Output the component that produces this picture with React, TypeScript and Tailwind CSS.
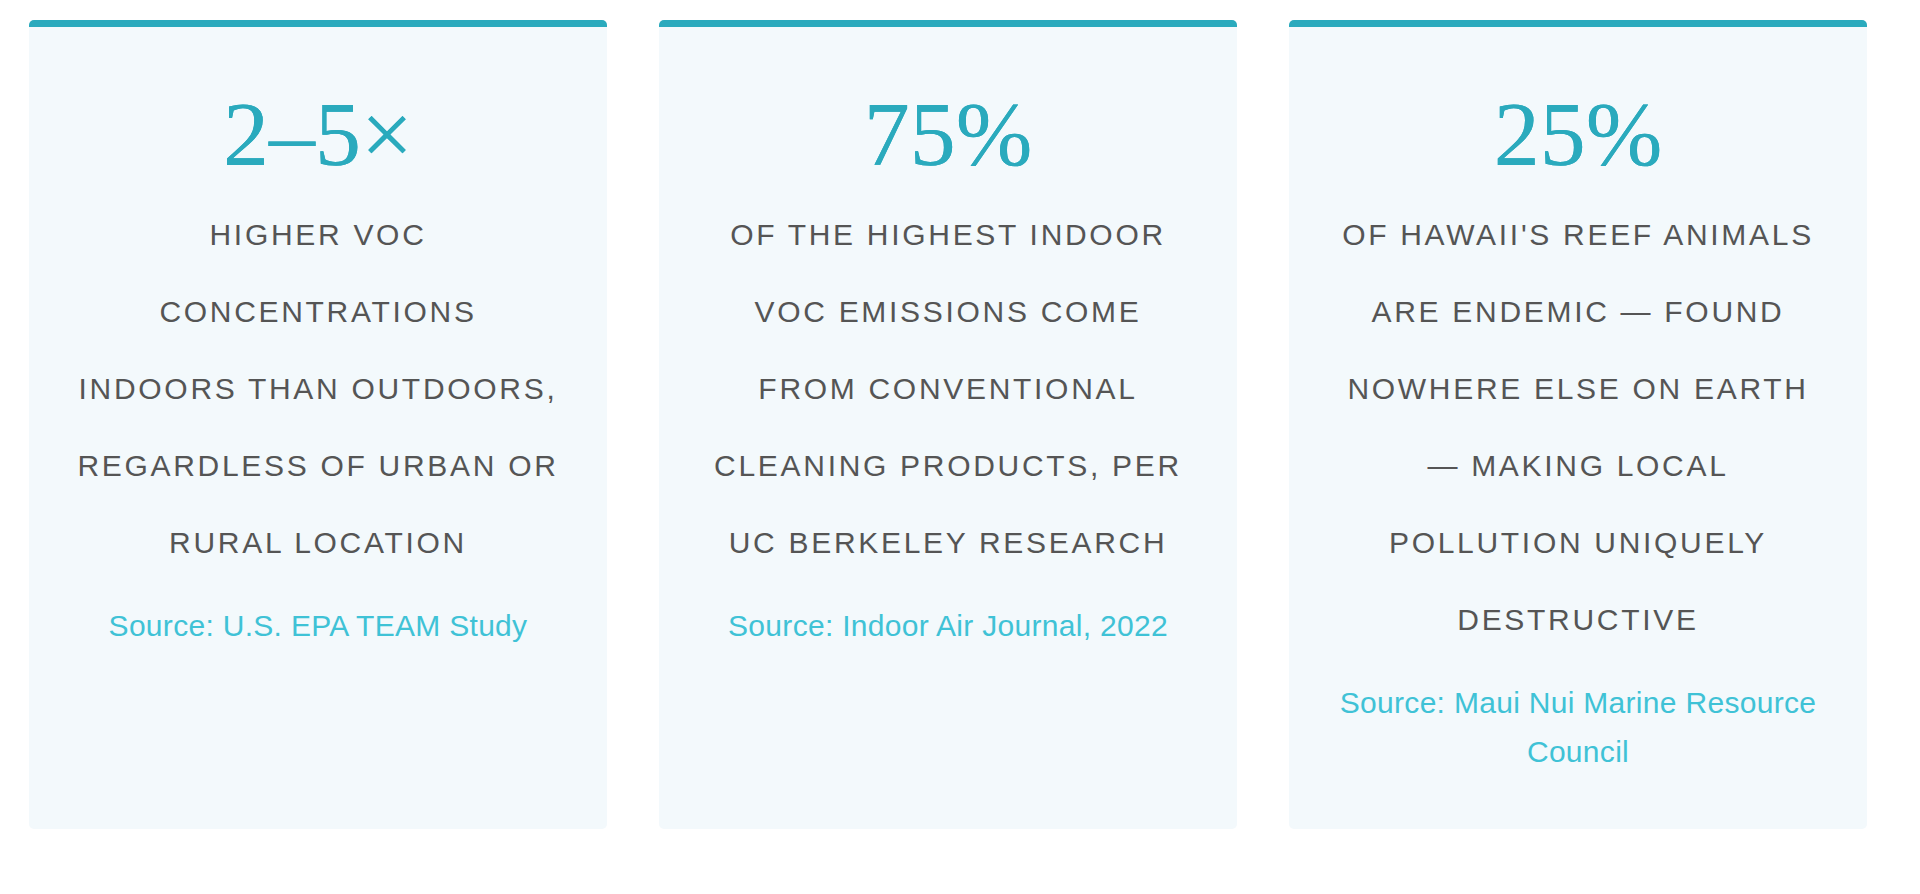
import React from 'react'

type Stat = {
  value: string
  text: string
  source: string
}

const stats: Stat[] = [
  {
    value: '2–5×',
    text: 'Higher VOC concentrations indoors than outdoors, regardless of urban or rural location',
    source: 'Source: U.S. EPA TEAM Study',
  },
  {
    value: '75%',
    text: 'of the highest indoor VOC emissions come from conventional cleaning products, per UC Berkeley research',
    source: 'Source: Indoor Air Journal, 2022',
  },
  {
    value: '25%',
    text: "of Hawaii's reef animals are endemic — found nowhere else on Earth — making local pollution uniquely destructive",
    source: 'Source: Maui Nui Marine Resource Council',
  },
]

const StatCard: React.FC<{ stat: Stat }> = ({ stat }) => {
  return (
    <div className="flex-1 rounded-[5px] border-t-[7px] border-[#2aaabd] bg-[#f3f9fc] px-[47px] pt-[61px] pb-[53px] text-center">
      <div className="font-['Georgia','Liberation_Serif',serif] text-[92px] leading-none text-[#2aaabd] [text-shadow:0_0_0.6px_#2aaabd]">
        {stat.value}
      </div>
      <p className="mt-4 font-['Liberation_Sans',Arial,sans-serif] text-[30px] leading-[77px] tracking-[2.7px] text-[#555555] uppercase">
        {stat.text}
      </p>
      <p className="mt-5 font-['Liberation_Sans',Arial,sans-serif] text-[30px] leading-[49px] tracking-[0.3px] text-[#3fc2d6]">
        {stat.source}
      </p>
    </div>
  )
}

export default function App() {
  return (
    <div className="min-h-screen bg-white pt-5 pl-[29px]">
      <div className="flex w-[1838px] gap-[52px]">
        {stats.map((s) => (
          <StatCard key={s.value} stat={s} />
        ))}
      </div>
    </div>
  )
}
